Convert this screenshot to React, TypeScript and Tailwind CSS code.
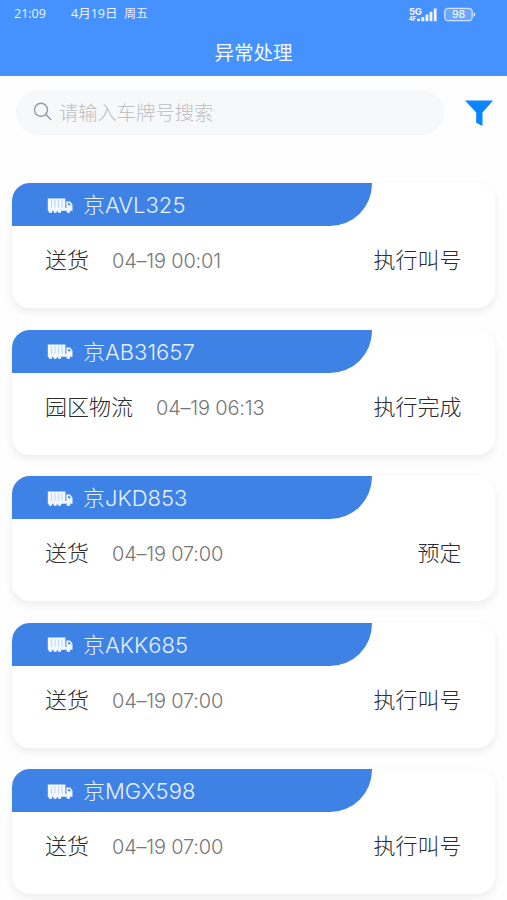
import React from 'react';

interface Task {
  plate: string;
  type: string;
  time: string;
  status: string;
}

const tasks: Task[] = [
  { plate: '京AVL325', type: '送货', time: '04–19 00:01', status: '执行叫号' },
  { plate: '京AB31657', type: '园区物流', time: '04–19 06:13', status: '执行完成' },
  { plate: '京JKD853', type: '送货', time: '04–19 07:00', status: '预定' },
  { plate: '京AKK685', type: '送货', time: '04–19 07:00', status: '执行叫号' },
  { plate: '京MGX598', type: '送货', time: '04–19 07:00', status: '执行叫号' },
];

function TruckIcon() {
  return (
    <svg width="26" height="16" viewBox="0 0 26 16" className="mt-[2px] shrink-0">
      <rect x="0.8" y="0.5" width="17.6" height="10" fill="#f3f8ff" />
      <path d="M4.5 2v7.5M8 2v7.5M11.5 2v7.5M15 2v7.5" stroke="#a5c6f5" strokeWidth="0.7" />
      <path d="M0.8 10h18.6V3.6h3.2c0.8 0 2.9 2.6 2.9 3.6v5.6h-1.5l-2.4-1.6-2.6 1.6H0.8z" fill="#f3f8ff" />
      <path d="M21 5h1.6l1.6 2.2H21z" fill="#5b95ea" />
      <g fill="#f3f8ff">
        <circle cx="3.4" cy="13" r="1.9" />
        <circle cx="8.2" cy="13" r="1.9" />
        <circle cx="12.5" cy="13" r="1.9" />
        <circle cx="21.4" cy="13" r="2" />
      </g>
    </svg>
  );
}

function StatusBar() {
  return (
    <div className="flex h-7 items-center justify-between pl-[14px] pr-[31px] text-[12px] text-[#eaf3ff]">
      <div className="flex items-center font-['Open_Sans','Noto_Sans_CJK_SC',sans-serif]">
        <span className="w-[57px] text-[12.5px]">21:09</span>
        <span className="w-[53px] text-[12.5px]">4月19日</span>
        <span>周五</span>
      </div>
      <div className="flex items-center gap-[6px]">
        <svg width="30" height="17" viewBox="0 0 30 17" fill="#f0f6ff">
          <text x="1" y="8.7" fontSize="9.5" fontWeight="700" fontFamily="Inter, sans-serif" textLength="13">5G</text>
          <text x="1" y="15.2" fontSize="5.5" fontWeight="800" fontFamily="Inter, sans-serif">4F</text>
          <rect x="9.2" y="12.8" width="2.8" height="2.4" />
          <rect x="13.4" y="11" width="2.8" height="4.2" />
          <rect x="17.5" y="8.5" width="2.8" height="6.7" />
          <rect x="21.6" y="5.8" width="2.8" height="9.4" />
          <rect x="25.8" y="2.5" width="2.8" height="12.7" />
        </svg>
        <svg width="32" height="15" viewBox="0 0 32 15">
          <rect x="0.8" y="1.3" width="27.4" height="12.4" rx="3.5" fill="#68a6ff" stroke="#cfe2ff" strokeWidth="1.3" />
          <rect x="29.6" y="5.5" width="1.5" height="4" rx="0.7" fill="#dbeaff" />
          <text x="14.5" y="11.3" fontSize="10.5" fontWeight="500" fontFamily="Inter, sans-serif" textAnchor="middle" fill="#f3f8ff">98</text>
        </svg>
      </div>
    </div>
  );
}

function TaskCard({ task }: { task: Task }) {
  return (
    <div className="h-[125px] shrink-0 rounded-[18px] bg-white shadow-[0_4px_9px_rgba(0,0,0,0.07)]">
      <div className="flex h-[43px] w-[360px] items-center rounded-tl-[18px] rounded-br-[42px] bg-[#3f82e6] pl-[35px]">
        <TruckIcon />
        <span className="ml-[10px] pt-[2px] text-[22px] leading-[43px] font-light text-[#e6f0ff]">{task.plate}</span>
      </div>
      <div className="flex h-[69px] items-center pr-[33.5px] pl-[33px]">
        <span className="text-[22px] font-light text-[#2b2b2b]">{task.type}</span>
        <span className="ml-[23px] pt-px text-[20px] font-light tracking-[-0.2px] text-[#777777]">{task.time}</span>
        <span className="ml-auto text-[22px] font-light text-[#2b2b2b]">{task.status}</span>
      </div>
    </div>
  );
}

export default function App() {
  return (
    <div className="flex h-[900px] w-full flex-col overflow-hidden bg-[#fefefe] font-['Inter','Noto_Sans_CJK_SC',sans-serif]">
      <header className="h-[76px] shrink-0 bg-[#4592ff]">
        <StatusBar />
        <h1 className="pt-px text-center text-[19.5px] leading-[48px] font-normal text-[#f3f8ff]">异常处理</h1>
      </header>

      {/* Search */}
      <div className="flex shrink-0 items-center pt-[14px] pl-4">
        <div className="flex h-[45px] w-[428px] items-center rounded-full bg-[#f6f8fa] pl-[17px]">
          <svg width="20" height="20" viewBox="0 0 20 20" fill="none" stroke="#999999" strokeWidth="1.4" strokeLinecap="round" className="-mt-[2px]">
            <circle cx="8" cy="7.8" r="6.5" />
            <path d="M12.8 12.6l5 5" />
          </svg>
          <span className="ml-[6px] pt-[2px] text-[19.3px] font-light text-[#bcbec0]">请输入车牌号搜索</span>
        </div>
        <svg width="30" height="28" viewBox="0 0 30 28" className="ml-[20px]">
          <path d="M1 1.5h28L18.5 13.5V27L12.2 23.8V13.5z" fill="#0a84ff" />
        </svg>
      </div>

      <main className="flex flex-col gap-[21.5px] px-3 pt-12">
        {tasks.map((task) => (
          <TaskCard key={task.plate} task={task} />
        ))}
      </main>
    </div>
  );
}
